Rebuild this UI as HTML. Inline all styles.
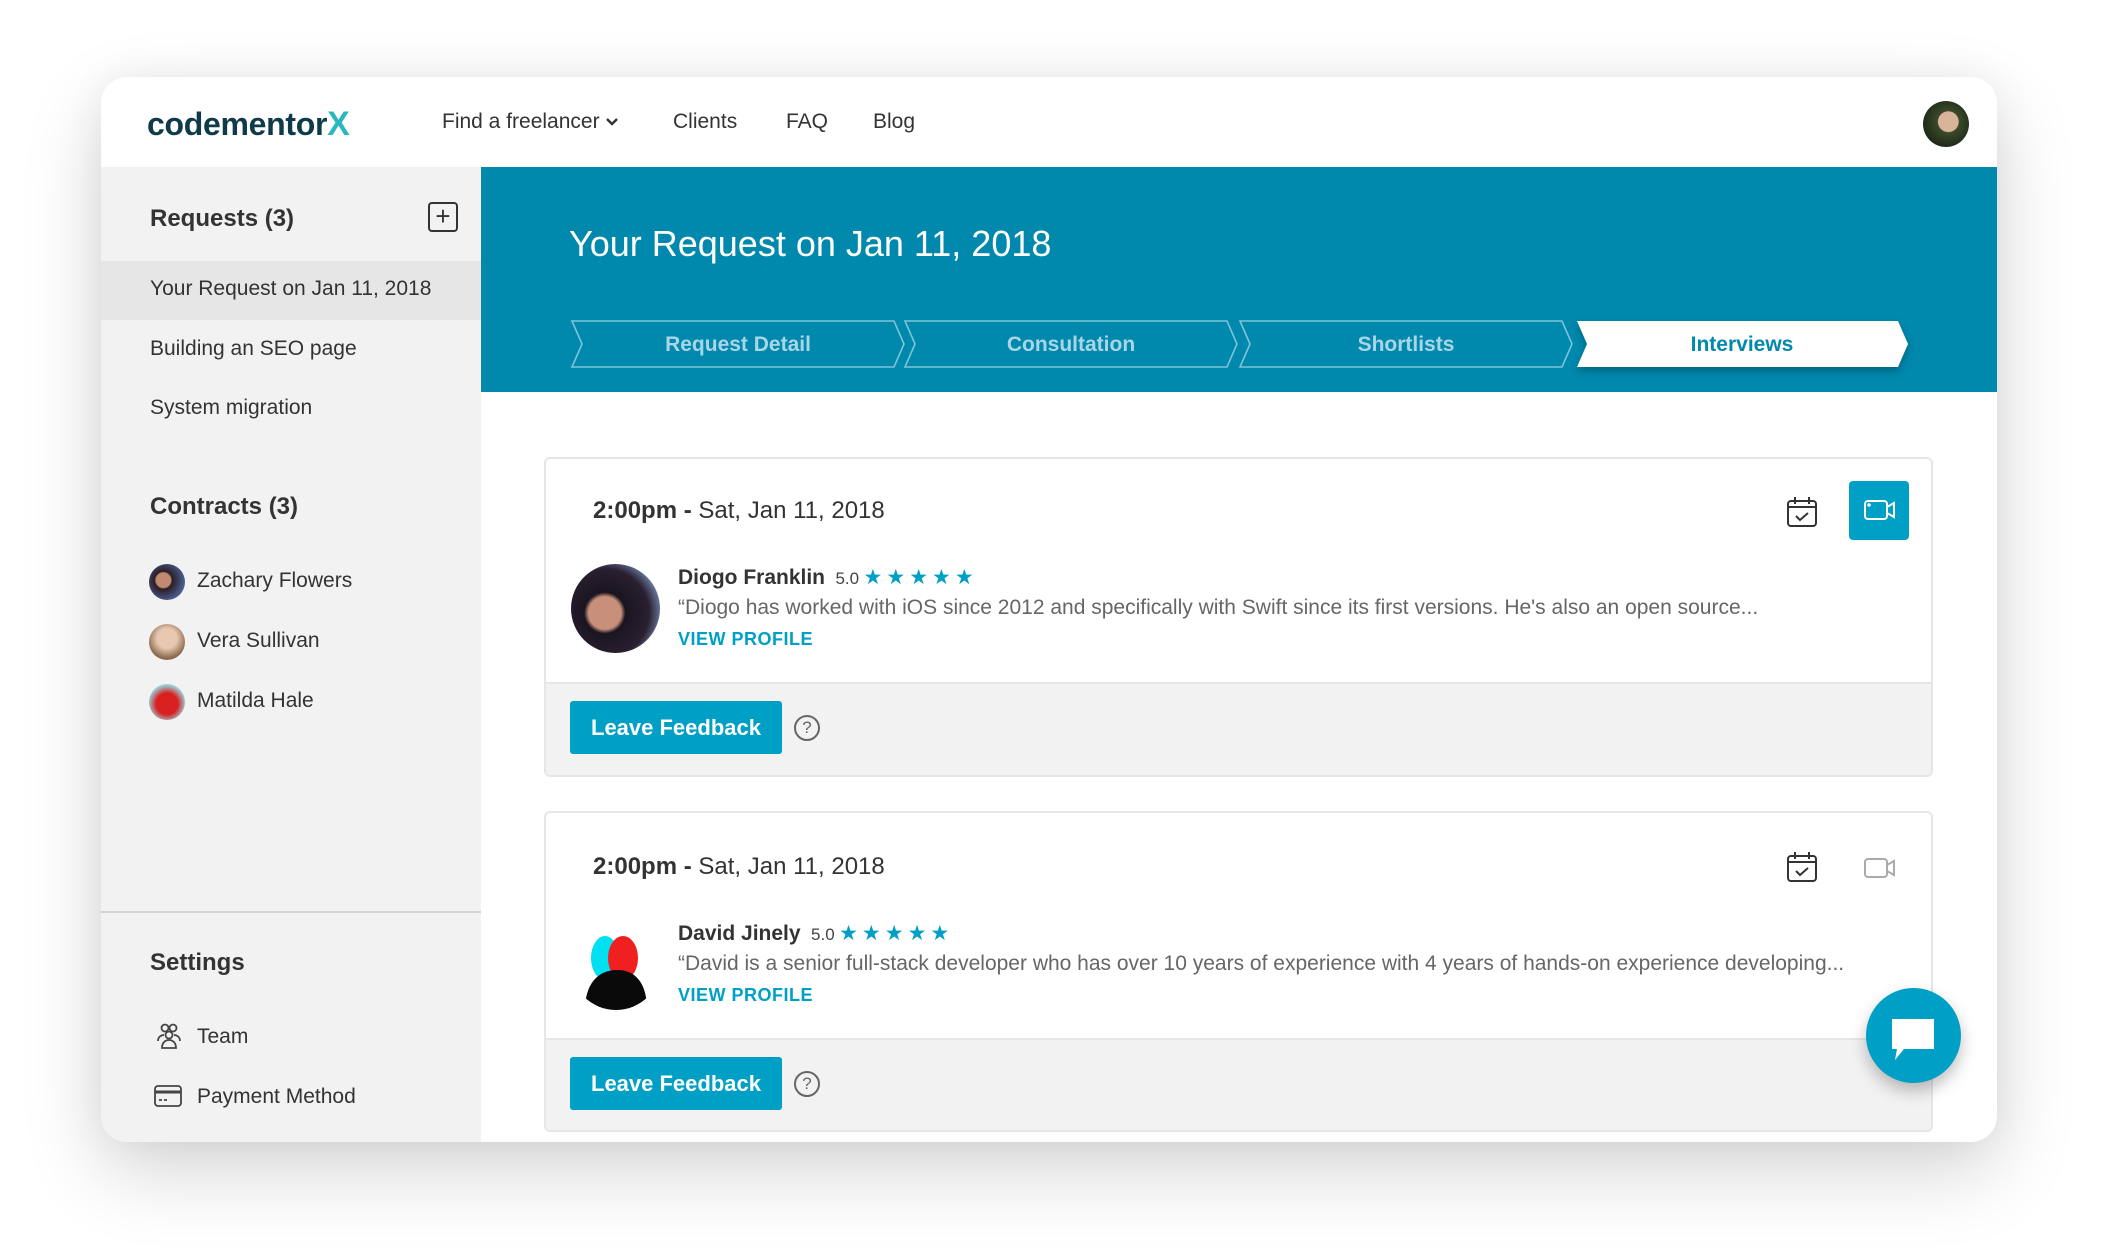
<!DOCTYPE html>
<html><head><meta charset="utf-8"><style>
*{margin:0;padding:0;box-sizing:border-box}
body{width:2120px;height:1254px;background:#fff;font-family:"Liberation Sans",sans-serif;color:#333;position:relative;overflow:hidden}
.win{position:absolute;left:101px;top:77px;width:1896px;height:1065px;background:#fff;border-radius:26px;box-shadow:0 30px 80px rgba(0,0,0,0.16),0 0 40px rgba(0,0,0,0.06);overflow:hidden}
.a{position:absolute;white-space:nowrap}
.side{position:absolute;left:0;top:90px;width:380px;height:975px;background:#f2f2f2}
.banner{position:absolute;left:380px;top:90px;right:0;height:225px;background:#0088ad}
.card{position:absolute;left:443px;width:1389px;border:2px solid #e6e6e6;border-radius:6px;background:#fff;overflow:hidden}
.foot{position:absolute;left:0;right:0;bottom:0;background:#f2f2f2;border-top:2px solid #e6e6e6}
.btn{position:absolute;left:24px;width:212px;height:53px;background:#00a0c6;border-radius:3px;color:#fff;font-weight:bold;font-size:22px;line-height:53px;text-align:center}
.q{position:absolute;left:248px;width:26px;height:26px;border:2px solid #666;border-radius:50%;font-size:17px;line-height:22px;text-align:center;color:#666}
.s{font-size:21px;color:#333}
.h{font-size:24px;font-weight:bold;color:#333}
.nm{font-size:21px;font-weight:bold}
.qt{font-size:21px;color:#666}
.vp{font-size:18px;font-weight:bold;color:#00a0c6;letter-spacing:.5px}
.st{color:#00a0c6;font-size:21px;letter-spacing:4px}
</style></head><body>
<div class="win">
  <div class="a" style="left:46px;top:28px;font-size:32px;font-weight:bold;color:#0f3a4a;letter-spacing:-0.3px">codementor<span style="color:#2ab7c2;font-size:34px">X</span></div>
  <div class="a s" style="left:341px;top:33px">Find a freelancer <svg width="14" height="10" viewBox="0 0 14 10" style="vertical-align:middle"><path d="M2 2l5 5 5-5" stroke="#333" stroke-width="2.4" fill="none"/></svg></div>
  <div class="a s" style="left:572px;top:33px">Clients</div>
  <div class="a s" style="left:685px;top:33px">FAQ</div>
  <div class="a s" style="left:772px;top:33px">Blog</div>
  <div class="a" style="left:1822px;top:24px;width:46px;height:46px;border-radius:50%;background:radial-gradient(circle at 55% 45%,#d9b39a 0 28%,#3b4a2a 30%,#1f2b18 70%)"></div>

  <div class="side">
    <div class="a h" style="left:49px;top:38px">Requests (3)</div>
    <div class="a" style="left:327px;top:35px;width:30px;height:30px;border:2px solid #333;border-radius:4px;font-size:26px;line-height:24px;text-align:center">+</div>
    <div class="a" style="left:0;top:94px;width:380px;height:59px;background:#e6e6e6"></div>
    <div class="a s" style="left:49px;top:110px">Your Request on Jan 11, 2018</div>
    <div class="a s" style="left:49px;top:170px">Building an SEO page</div>
    <div class="a s" style="left:49px;top:229px">System migration</div>
    <div class="a h" style="left:49px;top:326px">Contracts (3)</div>
    <div class="a" style="left:48px;top:397px;width:36px;height:36px;border-radius:50%;background:radial-gradient(circle at 40% 45%,#c08a70 0 25%,#2a1e24 30%,#5a7ac0 90%)"></div>
    <div class="a s" style="left:96px;top:402px">Zachary Flowers</div>
    <div class="a" style="left:48px;top:457px;width:36px;height:36px;border-radius:50%;background:radial-gradient(circle at 50% 40%,#e8c8b0 0 35%,#8a6a50 70%)"></div>
    <div class="a s" style="left:96px;top:462px">Vera Sullivan</div>
    <div class="a" style="left:48px;top:517px;width:36px;height:36px;border-radius:50%;background:radial-gradient(circle at 50% 55%,#d82020 0 40%,#9ad0d8 70%)"></div>
    <div class="a s" style="left:96px;top:522px">Matilda Hale</div>
    <div class="a" style="left:0;top:744px;width:380px;height:2px;background:#d4d4d4"></div>
    <div class="a h" style="left:49px;top:782px">Settings</div>
    <svg class="a" style="left:54px;top:856px" width="28" height="26" viewBox="0 0 28 26" fill="none" stroke="#444" stroke-width="1.8"><circle cx="10" cy="5" r="3.5"/><circle cx="18" cy="5" r="3.5"/><circle cx="14" cy="12" r="3.5"/><path d="M3 18c0-4 3-6 6-6M25 18c0-4-3-6-6-6M7 25c0-5 3-8 7-8s7 3 7 8z"/></svg>
    <div class="a s" style="left:96px;top:858px">Team</div>
    <svg class="a" style="left:53px;top:918px" width="28" height="22" viewBox="0 0 28 22" fill="none" stroke="#444" stroke-width="1.8"><rect x="1" y="1" width="26" height="20" rx="3"/><path d="M1 7h26" stroke-width="3"/><path d="M5 15h3M10 15h3"/></svg>
    <div class="a s" style="left:96px;top:918px">Payment Method</div>
  </div>

  <div class="banner">
    <div class="a" style="left:88px;top:56px;font-size:36px;color:#fff">Your Request on Jan 11, 2018</div>
  </div>
  <svg class="a" style="left:380px;top:90px" width="1516" height="225">
    <g fill="none" stroke="#7cc4da" stroke-width="1.6">
      <polygon points="91,154 413,154 423,177 413,200 91,200 101,177"/>
      <polygon points="424,154 746,154 756,177 746,200 424,200 434,177"/>
      <polygon points="759,154 1081,154 1091,177 1081,200 759,200 769,177"/>
    </g>
    <polygon points="1096,154 1417,154 1427,177 1417,200 1096,200 1106,177" fill="#fff" style="filter:drop-shadow(0 4px 4px rgba(0,0,0,.25))"/>
    <g font-family="Liberation Sans" font-size="21" font-weight="bold" text-anchor="middle">
      <text x="257" y="184" fill="#a9d6e6">Request Detail</text>
      <text x="590" y="184" fill="#a9d6e6">Consultation</text>
      <text x="925" y="184" fill="#a9d6e6">Shortlists</text>
      <text x="1261" y="184" fill="#0088ad">Interviews</text>
    </g>
  </svg>

  <div class="card" style="top:380px;height:320px">
    <div class="a" style="left:47px;top:38px;font-size:24px"><b>2:00pm -</b> Sat, Jan 11, 2018</div>
    <svg class="a" style="left:1240px;top:37px" width="32" height="32" viewBox="0 0 32 32" fill="none" stroke="#333" stroke-width="2"><rect x="2" y="5" width="28" height="25" rx="3"/><path d="M2 11h28M9 1v7M23 1v7M10 20l4 4 8-7"/></svg>
    <div class="a" style="left:1303px;top:22px;width:60px;height:59px;background:#00a0c6;border-radius:4px"></div>
    <svg class="a" style="left:1318px;top:40px" width="32" height="22" viewBox="0 0 32 22" fill="none" stroke="#fff" stroke-width="2"><rect x="1" y="2" width="22" height="18" rx="3"/><path d="M23 8l7-4v14l-7-4"/><circle cx="5" cy="6" r=".8" fill="#fff"/></svg>
    <div class="a" style="left:25px;top:105px;width:89px;height:89px;border-radius:50%;background:radial-gradient(circle at 38% 55%,#c8907a 0 22%,#1a1420 28%,#2a2030 60%,#8aa8d8 85%)"></div>
    <div class="a" style="left:132px;top:106px"><span class="nm">Diogo Franklin</span> <span style="font-size:17px;color:#444;margin-left:6px">5.0</span> <span class="st">★★★★★</span></div>
    <div class="a qt" style="left:132px;top:137px">“Diogo has worked with iOS since 2012 and specifically with Swift since its first versions. He's also an open source...</div>
    <div class="a vp" style="left:132px;top:170px">VIEW PROFILE</div>
    <div class="foot" style="height:93px">
      <div class="btn" style="top:17px">Leave Feedback</div>
      <div class="q" style="top:31px">?</div>
    </div>
  </div>

  <div class="card" style="top:734px;height:321px">
    <div class="a" style="left:47px;top:40px;font-size:24px"><b>2:00pm -</b> Sat, Jan 11, 2018</div>
    <svg class="a" style="left:1240px;top:38px" width="32" height="32" viewBox="0 0 32 32" fill="none" stroke="#333" stroke-width="2"><rect x="2" y="5" width="28" height="25" rx="3"/><path d="M2 11h28M9 1v7M23 1v7M10 20l4 4 8-7"/></svg>
    <svg class="a" style="left:1318px;top:44px" width="32" height="22" viewBox="0 0 32 22" fill="none" stroke="#aaa" stroke-width="2"><rect x="1" y="2" width="22" height="18" rx="3"/><path d="M23 8l7-4v14l-7-4"/></svg>
    <svg class="a" style="left:25px;top:107px" width="90" height="90" viewBox="0 0 90 90"><clipPath id="c"><circle cx="45" cy="45" r="45"/></clipPath><g clip-path="url(#c)"><rect width="90" height="90" fill="#fff"/><ellipse cx="34" cy="38" rx="14" ry="22" fill="#00e0f0"/><ellipse cx="52" cy="38" rx="15" ry="22" fill="#f02020"/><path d="M14 90c0-25 12-40 32-40s30 15 30 40z" fill="#0a0a0a"/></g></svg>
    <div class="a" style="left:132px;top:108px"><span class="nm">David Jinely</span> <span style="font-size:17px;color:#444;margin-left:6px">5.0</span> <span class="st">★★★★★</span></div>
    <div class="a qt" style="left:132px;top:139px">“David is a senior full-stack developer who has over 10 years of experience with 4 years of hands-on experience developing...</div>
    <div class="a vp" style="left:132px;top:172px">VIEW PROFILE</div>
    <div class="foot" style="height:92px">
      <div class="btn" style="top:17px">Leave Feedback</div>
      <div class="q" style="top:31px">?</div>
    </div>
  </div>

  <div class="a" style="left:1765px;top:911px;width:95px;height:95px;border-radius:50%;background:#00a0c6;box-shadow:0 8px 16px rgba(0,0,0,.25)"></div>
  <svg class="a" style="left:1789px;top:940px" width="46" height="44" viewBox="0 0 46 44"><path d="M2 2h42v30H14l-9 11 2-11H2z" fill="#fff"/></svg>
</div>
</body></html>
